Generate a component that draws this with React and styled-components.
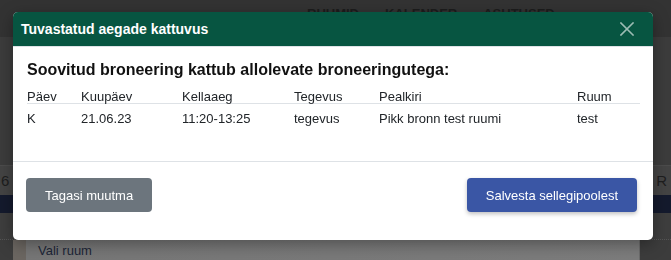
import styled, { createGlobalStyle } from 'styled-components';

const GlobalStyle = createGlobalStyle`
    html, body {
        margin: 0;
        padding: 0;
        background: #3c3c3c;
        font-family: "Liberation Sans", Arial, sans-serif;
    }
    * {
        box-sizing: border-box;
    }
`;

const columns = ['Päev', 'Kuupäev', 'Kellaaeg', 'Tegevus', 'Pealkiri', 'Ruum'];

const overlaps = [
    {
        day: 'K',
        date: '21.06.23',
        time: '11:20-13:25',
        activity: 'tegevus',
        title: 'Pikk bronn test ruumi',
        room: 'test'
    }
];

const navLinks = ['RUUMID', 'KALENDER', 'ASUTUSED'];

const CloseIcon = () => (
    <svg width="14" height="14" viewBox="0 0 14 14" fill="none">
        <path d="M1 1L13 13M13 1L1 13" stroke="currentColor" strokeWidth="1.6" strokeLinecap="square" />
    </svg>
);

const App = () => {
    return (
        <>
            <GlobalStyle />
            <Page>
                <NavBar>
                    {navLinks.map(link => (
                        <NavLink key={link}>{link}</NavLink>
                    ))}
                </NavBar>
                <PageSpacer />
                <CalendarRow>
                    <span>6</span>
                    <span>R</span>
                </CalendarRow>
                <CalendarBand />
                <DottedArea />
                <SelectRow>
                    <SelectEdge />
                    <SelectBox>Vali ruum</SelectBox>
                </SelectRow>
            </Page>

            <Overlay>
                <Modal>
                    <ModalHeader>
                        <ModalTitle>Tuvastatud aegade kattuvus</ModalTitle>
                        <CloseButton aria-label="Sulge">
                            <CloseIcon />
                        </CloseButton>
                    </ModalHeader>
                    <ModalBody>
                        <Heading>Soovitud broneering kattub allolevate broneeringutega:</Heading>
                        <Table>
                            <HeadRow>
                                {columns.map(col => (
                                    <span key={col}>{col}</span>
                                ))}
                            </HeadRow>
                            {overlaps.map((row, index) => (
                                <BodyRow key={index}>
                                    <span>{row.day}</span>
                                    <span>{row.date}</span>
                                    <span>{row.time}</span>
                                    <span>{row.activity}</span>
                                    <span>{row.title}</span>
                                    <span>{row.room}</span>
                                </BodyRow>
                            ))}
                        </Table>
                    </ModalBody>
                    <ModalFooter>
                        <Button variant="secondary">Tagasi muutma</Button>
                        <Button variant="primary">Salvesta sellegipoolest</Button>
                    </ModalFooter>
                </Modal>
            </Overlay>
        </>
    );
};

/* dimmed page behind the modal */
const Page = styled.div`
    width: 100%;
    height: 260px;
    overflow: hidden;
    background: #3c3c3c;
`;

const NavBar = styled.div`
    height: 37px;
    background: #333333;
    display: flex;
    gap: 26px;
    padding: 6px 0 0 307px;
`;

const NavLink = styled.span`
    font-size: 13px;
    font-weight: 700;
    line-height: 15px;
    color: #1c1c1c;
`;

const PageSpacer = styled.div`
    height: 128px;
`;

const CalendarRow = styled.div`
    height: 30px;
    background: #444444;
    border-top: 1px solid #4c4c4c;
    display: flex;
    justify-content: space-between;
    align-items: center;
    padding: 0 4px 0 1px;
    font-size: 15px;
    color: #1e1e1e;
`;

const CalendarBand = styled.div`
    height: 18px;
    background: #141a2d;
`;

const DottedArea = styled.div`
    height: 27px;
    border-bottom: 1px dotted #555;
    background: #3e3e3e;
`;

const SelectRow = styled.div`
    display: flex;
    height: 30px;
    padding: 0 31px 0 13px;
`;

const SelectEdge = styled.div`
    width: 13px;
    background: #6b6661;
`;

const SelectBox = styled.div`
    flex: 1;
    background: linear-gradient(90deg, #767676, #7c7c7c);
    border-right: 1px solid #6a6a6a;
    padding: 3px 12px;
    font-size: 13px;
    line-height: 15px;
    color: #1c2536;
`;

/* modal */
const Overlay = styled.div`
    position: fixed;
    inset: 0;
    display: flex;
    align-items: flex-start;
    padding: 12px 0 0 13px;
`;

const Modal = styled.div`
    width: 640px;
    background: #ffffff;
    border-radius: 5px;
    overflow: hidden;
    box-shadow: 0 4px 16px rgba(0, 0, 0, 0.35);
    display: flex;
    flex-direction: column;
`;

const ModalHeader = styled.div`
    height: 35px;
    background: #075541;
    border-bottom: 1px solid #dee2e6;
    display: flex;
    align-items: center;
    justify-content: space-between;
    padding: 0 19px 0 8px;
`;

const ModalTitle = styled.h5`
    margin: 0;
    font-size: 14px;
    font-weight: 700;
    color: #ffffff;
`;

const CloseButton = styled.button`
    border: none;
    background: none;
    padding: 0;
    width: 14px;
    height: 14px;
    color: #9cbbb3;
    display: flex;
    cursor: pointer;
`;

const ModalBody = styled.div`
    height: 115px;
    padding: 14px 13px 0 14px;
    border-bottom: 1px solid #dee2e6;
`;

const Heading = styled.h4`
    margin: 0 0 11px;
    font-size: 16px;
    line-height: 18px;
    font-weight: 700;
    color: #111111;
`;

const Table = styled.div`
    display: flex;
    flex-direction: column;
    font-size: 13px;
    color: #212529;
`;

const Row = styled.div`
    display: grid;
    grid-template-columns: 54px 101px 112px 85px 198px 1fr;
    span {
        white-space: nowrap;
    }
`;

const HeadRow = styled(Row)`
    line-height: 13px;
    border-bottom: 1px solid #dee2e6;
`;

const BodyRow = styled(Row)`
    line-height: 15px;
    padding-top: 7px;
`;

const ModalFooter = styled.div`
    height: 78px;
    display: flex;
    justify-content: space-between;
    align-items: flex-start;
    padding: 16px 16px 0 13px;
`;

const Button = styled.button`
    height: 34px;
    padding: 0 19px;
    border: none;
    border-radius: 4px;
    font-family: "Liberation Sans", Arial, sans-serif;
    font-size: 13px;
    color: #ffffff;
    cursor: pointer;
    background: ${props => (props.variant === 'primary' ? '#3a56a5' : '#6c757d')};
    box-shadow: ${props => (props.variant === 'primary' ? '0 2px 4px rgba(0, 0, 0, 0.25)' : 'none')};
`;

export default App;
